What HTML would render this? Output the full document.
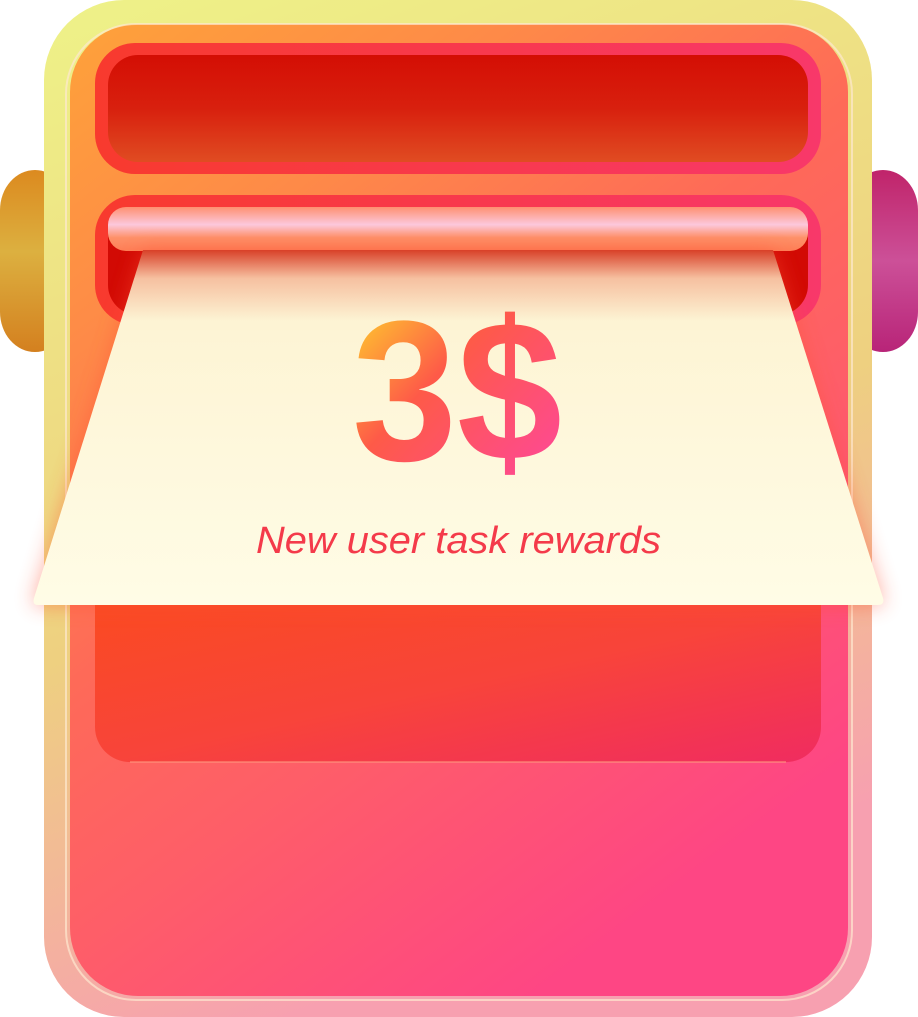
<!DOCTYPE html>
<html><head><meta charset="utf-8"><style>
html,body{margin:0;padding:0;background:#fff;}
svg{display:block}
</style></head><body>
<svg width="918" height="1017" viewBox="0 0 918 1017" xmlns="http://www.w3.org/2000/svg">
<defs>
<linearGradient id="tabL" x1="0" y1="0" x2="0" y2="1"><stop offset="0" stop-color="#dc8a1f"/><stop offset="0.45" stop-color="#dcb040"/><stop offset="1" stop-color="#d4801f"/></linearGradient>
<linearGradient id="tabR" x1="0" y1="0" x2="0" y2="1"><stop offset="0" stop-color="#c0246a"/><stop offset="0.5" stop-color="#cc5098"/><stop offset="1" stop-color="#b82478"/></linearGradient>
<linearGradient id="frame" x1="0" y1="0" x2="0.3" y2="1"><stop offset="0" stop-color="#eef288"/><stop offset="0.6" stop-color="#eed080"/><stop offset="1" stop-color="#f7a0b0"/></linearGradient>
<linearGradient id="body" x1="0" y1="0" x2="0.6" y2="1"><stop offset="0" stop-color="#fea23a"/><stop offset="0.25" stop-color="#fe8a48"/><stop offset="0.5" stop-color="#fe6a58"/><stop offset="0.7" stop-color="#fe5e68"/><stop offset="1" stop-color="#fe4684"/></linearGradient>
<linearGradient id="slotBorder" x1="0" y1="0" x2="1" y2="0"><stop offset="0" stop-color="#f83a2e"/><stop offset="1" stop-color="#f8386a"/></linearGradient>
<linearGradient id="slotIn" x1="0" y1="0" x2="0" y2="1"><stop offset="0" stop-color="#d40e04"/><stop offset="0.5" stop-color="#d8200e"/><stop offset="1" stop-color="#e04c22"/></linearGradient>
<linearGradient id="roller" x1="0" y1="0" x2="0" y2="1"><stop offset="0" stop-color="#fe9070"/><stop offset="0.4" stop-color="#fcc8dc"/><stop offset="0.7" stop-color="#fe9068"/><stop offset="1" stop-color="#fe7e56"/></linearGradient>
<linearGradient id="paper" x1="0" y1="0" x2="0" y2="1"><stop offset="0" stop-color="#d84028"/><stop offset="0.08" stop-color="#f6c0a0"/><stop offset="0.2" stop-color="#fdf4d4"/><stop offset="1" stop-color="#fffce6"/></linearGradient>
<linearGradient id="lower" x1="0" y1="0" x2="1" y2="1"><stop offset="0" stop-color="#fa4a22"/><stop offset="0.5" stop-color="#f8443a"/><stop offset="1" stop-color="#f02c60"/></linearGradient>
<linearGradient id="num" gradientUnits="userSpaceOnUse" x1="370" y1="310" x2="540" y2="470"><stop offset="0" stop-color="#fec030"/><stop offset="0.4" stop-color="#fe5a48"/><stop offset="1" stop-color="#fe4a90"/></linearGradient>
<filter id="glow" x="-10%" y="-10%" width="120%" height="130%"><feGaussianBlur stdDeviation="10"/></filter>
</defs>
<rect x="0" y="170" width="70" height="182" rx="40" fill="url(#tabL)"/>
<rect x="848" y="170" width="70" height="182" rx="40" fill="url(#tabR)"/>
<rect x="44" y="0" width="828" height="1017" rx="80" fill="url(#frame)"/>
<rect x="70" y="24" width="778" height="972" rx="68" fill="url(#body)"/>
<rect x="66" y="24" width="786" height="976" rx="70" fill="none" stroke="#fde8d0" stroke-width="2" opacity="0.7"/>
<rect x="95" y="43" width="726" height="131" rx="40" fill="url(#slotBorder)"/>
<rect x="108" y="55" width="700" height="107" rx="30" fill="url(#slotIn)"/>
<rect x="95" y="195" width="726" height="130" rx="40" fill="url(#slotBorder)"/>
<rect x="108" y="207" width="700" height="108" rx="30" fill="#d20a04"/>
<rect x="108" y="207" width="700" height="44" rx="18" fill="url(#roller)"/>
<path d="M95 605 H821 V727 a35 35 0 0 1 -35 35 H130 a35 35 0 0 1 -35 -35Z" fill="url(#lower)"/>
<path d="M130 762 H786" stroke="#ff9a80" stroke-width="1.5" opacity="0.7"/>
<path d="M143 250 H773 L883 600 Q885 605 878 606 H38 Q32 605 34 598 Z" fill="#ff5030" opacity="0.45" filter="url(#glow)"/>
<path d="M143 250 H773 L883 598 Q885 605 878 605 H38 Q32 605 34 598 Z" fill="url(#paper)"/>
<text x="352" y="460" textLength="210" lengthAdjust="spacingAndGlyphs" font-family="'Liberation Sans',sans-serif" font-weight="bold" font-size="200" fill="url(#num)">3$</text>
<text x="256" y="553" textLength="405" lengthAdjust="spacingAndGlyphs" font-family="'Liberation Sans',sans-serif" font-style="italic" font-size="38" fill="#f43a4a">New user task rewards</text>
</svg>
</body></html>
